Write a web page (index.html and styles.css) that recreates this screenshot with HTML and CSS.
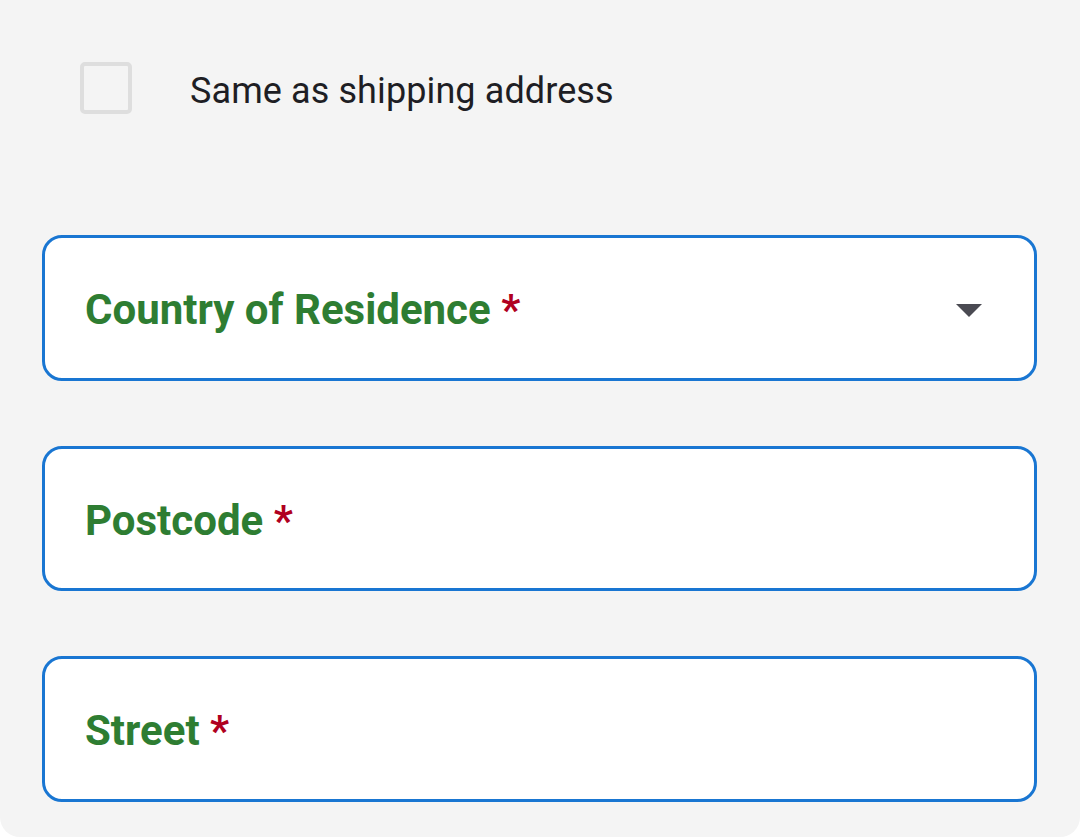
FILE: index.html
```html
<!DOCTYPE html>
<html>
<head>
<meta charset="utf-8">
<link rel="stylesheet" href="styles.css">
</head>
<body>
<div class="panel">
  <label class="check-row">
    <span class="checkbox"></span>
    <span class="check-text">Same as shipping address</span>
  </label>
  <div class="fields">
    <div class="field">
      <span class="label">Country of Residence <span class="req">*</span></span>
      <svg class="arrow" width="26" height="13" viewBox="0 0 26 13"><path d="M0 0 H26 L13 13 Z" fill="#4a4a52"/></svg>
    </div>
    <div class="field">
      <span class="label">Postcode <span class="req">*</span></span>
    </div>
    <div class="field">
      <span class="label">Street <span class="req">*</span></span>
    </div>
  </div>
</div>
</body>
</html>
```
FILE: styles.css
```css
html, body {
  margin: 0;
  padding: 0;
  background: #ffffff;
}
body {
  font-family: Roboto, "Liberation Sans", sans-serif;
}
.panel {
  width: 1080px;
  height: 837px;
  box-sizing: border-box;
  background: #f4f4f4;
  border-radius: 0 0 20px 20px;
  padding: 62px 43px 0 42px;
}
.check-row {
  display: flex;
  align-items: center;
  padding-left: 38px;
  height: 52px;
}
.checkbox {
  width: 52px;
  height: 52px;
  box-sizing: border-box;
  border: 4px solid #dedede;
  border-radius: 5px;
  flex: none;
}
.check-text {
  margin-left: 58px;
  margin-top: 5px;
  font-size: 36px;
  color: #1e1e24;
  letter-spacing: 0.1px;
}
.fields {
  margin-top: 121px;
  display: flex;
  flex-direction: column;
  gap: 65px;
}
.field {
  height: 145.5px;
  box-sizing: border-box;
  border: 3px solid #1976d2;
  border-radius: 20px;
  background: #ffffff;
  display: flex;
  align-items: center;
  justify-content: space-between;
  padding: 4px 52px 0 40px;
}
.label {
  font-size: 42px;
  font-weight: 700;
  color: #2e7d32;
}
.req {
  color: #b00020;
}
.arrow {
  display: block;
  margin-top: 2px;
}
```
